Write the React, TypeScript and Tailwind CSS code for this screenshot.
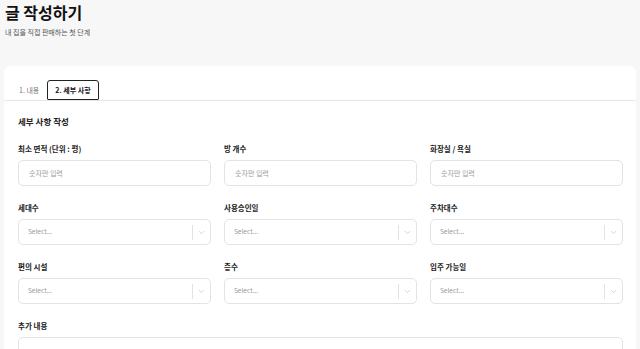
import { ChevronDown } from 'lucide-react';

const font = { fontFamily: '"Noto Sans CJK KR", "Noto Sans", sans-serif' };

function Field({ label, children }: { label: string; children: React.ReactNode }) {
  return (
    <div className="flex flex-col">
      <label className="h-[12px] text-[7.5px] font-semibold leading-[12px] text-[#222]">{label}</label>
      <div className="mt-[5px]">{children}</div>
    </div>
  );
}

function NumberInput() {
  return (
    <div className="flex h-[26px] items-center rounded-[5px] border border-[#e3e3e3] bg-white px-[10px] text-[7px] text-[#9a9a9a]">
      숫자만 입력
    </div>
  );
}

function SelectBox() {
  return (
    <div className="flex h-[26px] items-center rounded-[5px] border border-[#e3e3e3] bg-white pl-[9px]">
      <span className="flex-1 text-[6.5px] text-[#9a9a9a]">Select...</span>
      <span className="h-[15px] w-px bg-[#e3e3e3]" />
      <span className="flex w-[17px] items-center justify-center text-[#b5b5b5]">
        <ChevronDown size={9} strokeWidth={1.5} />
      </span>
    </div>
  );
}

export default function App() {
  return (
    <div className="h-[349px] overflow-hidden bg-[#f7f7f7] px-[4px] pt-[2px]" style={font}>
      <h1 className="pl-[1px] text-[16px] font-bold leading-[20px] text-[#111]">글 작성하기</h1>
      <p className="mt-[4px] pl-[1px] text-[7px] leading-[12px] text-[#555]">내 집을 직접 판매하는 첫 단계</p>

      <div className="mt-[28px] rounded-[6px] bg-white pb-[20px]">
        <div className="flex items-center gap-[8px] border-b border-[#e6e6e6] px-[15px] pt-[14px]">
          <button type="button" className="h-[20px] text-[7px] text-[#777]">1. 내용</button>
          <button
            type="button"
            className="h-[20px] rounded-t-[3px] rounded-b-[1px] border border-[#222] px-[7px] text-[7px] font-semibold text-[#111]"
          >
            2. 세부 사항
          </button>
        </div>

        <div className="pl-[14px] pr-[13px] pt-[13px]">
          <h2 className="text-[8.5px] font-semibold leading-[14px] text-[#222]">세부 사항 작성</h2>

          <div className="mt-[15px] grid grid-cols-3 gap-x-[13px] gap-y-[16px]">
            <Field label="최소 면적 (단위 : 평)">
              <NumberInput />
            </Field>
            <Field label="방 개수">
              <NumberInput />
            </Field>
            <Field label="화장실 / 욕실">
              <NumberInput />
            </Field>
            <Field label="세대수">
              <SelectBox />
            </Field>
            <Field label="사용승인일">
              <SelectBox />
            </Field>
            <Field label="주차대수">
              <SelectBox />
            </Field>
            <Field label="편의 시설">
              <SelectBox />
            </Field>
            <Field label="층수">
              <SelectBox />
            </Field>
            <Field label="입주 가능일">
              <SelectBox />
            </Field>
            <div className="col-span-3">
              <Field label="추가 내용">
                <div className="h-[60px] rounded-[5px] border border-[#e3e3e3] bg-white" />
              </Field>
            </div>
          </div>
        </div>
      </div>
    </div>
  );
}
